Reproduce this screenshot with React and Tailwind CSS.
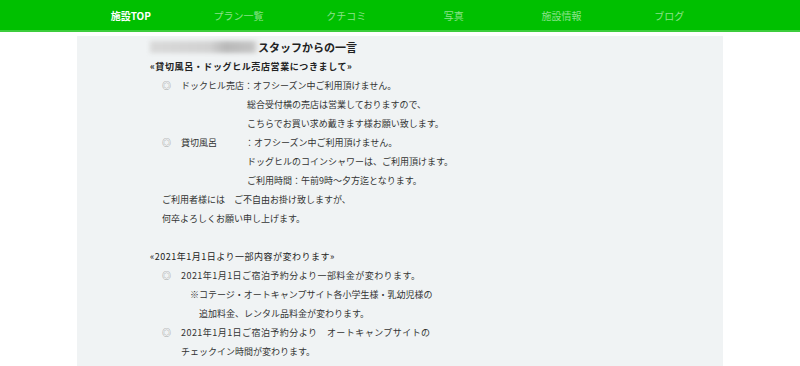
import React from 'react'

const NAV = ['施設TOP', 'プラン一覧', 'クチコミ', '写真', '施設情報', 'ブログ']

function Mark() {
  return <span className="w-[31px] pl-[12px] text-[9px] text-[#8a8a8a]">◎</span>
}

function Bullet({ children, wide }) {
  return (
    <div className="flex items-center h-[19px]">
      <Mark />
      <span className={wide ? 'tracking-[0.45px]' : ''}>{children}</span>
    </div>
  )
}

function Line({ pad, children }) {
  return <div className={`h-[19px] flex items-center ${pad}`}>{children}</div>
}

export default function App() {
  return (
    <div className="w-[800px] h-[366px] overflow-hidden bg-white" style={{ fontFamily: '"Noto Sans CJK JP", "Noto Sans", sans-serif' }}>
      <header className="h-[32px] bg-[#00c000] border-b-2 border-[#3ccd3c]">
        <nav className="w-[646px] mx-auto grid grid-cols-6 h-[30px] items-center">
          {NAV.map((n, i) => (
            <div key={n} className={`text-center text-[10px] ${i === 0 ? 'font-bold text-white' : 'text-[#8be28b]'}`}>{n}</div>
          ))}
        </nav>
      </header>
      <main className="mt-[4px] w-[646px] ml-[77px] h-[340px] bg-[#f0f3f4] pt-[1px] pl-[73px] text-[9px] text-[#333]">
        <div className="flex items-center h-[20px]">
          <span className="inline-block w-[108px] h-[12px] blur-[2px] bg-[linear-gradient(90deg,#d9d9d9_0%,#d2d2d2_55%,#b9b9b9_70%,#c4c4c4_95%,#e8e8e8_100%)]" />
          <span className="text-[11px] font-bold text-[#222]">スタッフからの一言</span>
        </div>
        <div className="h-[19px] flex items-center font-bold text-[#222] tracking-[0.6px]">«貸切風呂・ドッグヒル売店営業につきまして»</div>
        <Bullet>ドックヒル売店：オフシーズン中ご利用頂けません。</Bullet>
        <Line pad="pl-[97px]">総合受付横の売店は営業しておりますので、</Line>
        <Line pad="pl-[97px]">こちらでお買い求め戴きます様お願い致します。</Line>
        <div className="flex items-center h-[19px]">
          <Mark />
          <span className="w-[64px]">貸切風呂</span>
          <span>：オフシーズン中ご利用頂けません。</span>
        </div>
        <Line pad="pl-[97px]">ドッグヒルのコインシャワーは、ご利用頂けます。</Line>
        <Line pad="pl-[97px]">ご利用時間：午前9時～夕方迄となります。</Line>
        <Line pad="pl-[12px]">ご利用者様には　ご不自由お掛け致しますが、</Line>
        <Line pad="pl-[12px]">何卒よろしくお願い申し上げます。</Line>
        <div className="h-[19px]" />
        <div className="h-[19px] flex items-center text-[#222] tracking-[0.5px]">«2021年1月1日より一部内容が変わります»</div>
        <Bullet wide>2021年1月1日ご宿泊予約分より一部料金が変わります。</Bullet>
        <Line pad="pl-[40px]">※コテージ・オートキャンプサイト各小学生様・乳幼児様の</Line>
        <Line pad="pl-[49px]">追加料金、レンタル品料金が変わります。</Line>
        <Bullet wide>2021年1月1日ご宿泊予約分より　オートキャンプサイトの</Bullet>
        <Line pad="pl-[31px]">チェックイン時間が変わります。</Line>
      </main>
    </div>
  )
}
